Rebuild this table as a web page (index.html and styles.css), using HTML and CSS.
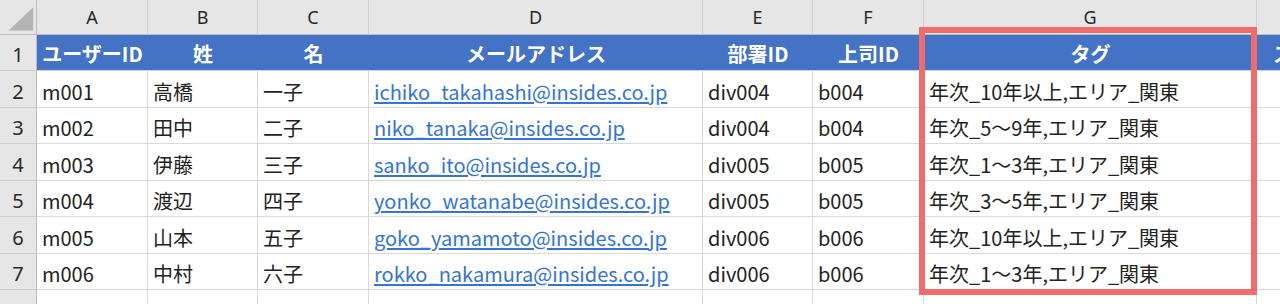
FILE: index.html
```html
<!DOCTYPE html>
<html lang="ja">
<head>
<meta charset="utf-8">
<title>Sheet</title>
<link rel="stylesheet" href="styles.css">
</head>
<body>
<div class="sheet">
  <div class="grid">
    <div class="corner"><svg width="37" height="34" viewBox="0 0 37 34"><polygon points="34,7 34,31 9,31" fill="#b4b4b4"/></svg></div>
    <div class="colhead">A</div>
    <div class="colhead">B</div>
    <div class="colhead">C</div>
    <div class="colhead">D</div>
    <div class="colhead">E</div>
    <div class="colhead">F</div>
    <div class="colhead">G</div>
    <div class="colhead"></div>

    <div class="rowhead">1</div>
    <div class="hdr">ユーザーID</div>
    <div class="hdr">姓</div>
    <div class="hdr">名</div>
    <div class="hdr">メールアドレス</div>
    <div class="hdr">部署ID</div>
    <div class="hdr">上司ID</div>
    <div class="hdr">タグ</div>
    <div class="hdr hdr-clip">ステータス</div>

    <div class="rowhead">2</div>
    <div class="cell">m001</div>
    <div class="cell">高橋</div>
    <div class="cell">一子</div>
    <div class="cell"><span class="link">ichiko_takahashi@insides.co.jp</span></div>
    <div class="cell">div004</div>
    <div class="cell">b004</div>
    <div class="cell">年次_10年以上,エリア_関東</div>
    <div class="cell"></div>

    <div class="rowhead">3</div>
    <div class="cell">m002</div>
    <div class="cell">田中</div>
    <div class="cell">二子</div>
    <div class="cell"><span class="link">niko_tanaka@insides.co.jp</span></div>
    <div class="cell">div004</div>
    <div class="cell">b004</div>
    <div class="cell">年次_5～9年,エリア_関東</div>
    <div class="cell"></div>

    <div class="rowhead">4</div>
    <div class="cell">m003</div>
    <div class="cell">伊藤</div>
    <div class="cell">三子</div>
    <div class="cell"><span class="link">sanko_ito@insides.co.jp</span></div>
    <div class="cell">div005</div>
    <div class="cell">b005</div>
    <div class="cell">年次_1～3年,エリア_関東</div>
    <div class="cell"></div>

    <div class="rowhead">5</div>
    <div class="cell">m004</div>
    <div class="cell">渡辺</div>
    <div class="cell">四子</div>
    <div class="cell"><span class="link">yonko_watanabe@insides.co.jp</span></div>
    <div class="cell">div005</div>
    <div class="cell">b005</div>
    <div class="cell">年次_3～5年,エリア_関東</div>
    <div class="cell"></div>

    <div class="rowhead">6</div>
    <div class="cell">m005</div>
    <div class="cell">山本</div>
    <div class="cell">五子</div>
    <div class="cell"><span class="link">goko_yamamoto@insides.co.jp</span></div>
    <div class="cell">div006</div>
    <div class="cell">b006</div>
    <div class="cell">年次_10年以上,エリア_関東</div>
    <div class="cell"></div>

    <div class="rowhead">7</div>
    <div class="cell">m006</div>
    <div class="cell">中村</div>
    <div class="cell">六子</div>
    <div class="cell"><span class="link">rokko_nakamura@insides.co.jp</span></div>
    <div class="cell">div006</div>
    <div class="cell">b006</div>
    <div class="cell">年次_1～3年,エリア_関東</div>
    <div class="cell"></div>

    <div class="rowhead">8</div>
    <div class="cell"></div>
    <div class="cell"></div>
    <div class="cell"></div>
    <div class="cell"></div>
    <div class="cell"></div>
    <div class="cell"></div>
    <div class="cell"></div>
    <div class="cell"></div>
  </div>
  <div class="highlight"></div>
</div>
</body>
</html>
```

FILE: styles.css
```css
* { box-sizing: border-box; }
html, body { margin: 0; padding: 0; background: #fff; overflow: hidden; }
body {
  font-family: "Noto Sans CJK JP", "Noto Sans", sans-serif;
  color: #222;
}
.sheet {
  position: relative;
  width: 1280px;
  height: 304px;
  overflow: hidden;
}
.grid {
  display: grid;
  grid-template-columns: 37px 111px 110px 111px 334px 110px 111px 333px 200px;
  grid-template-rows: 35px 36px 37px 36px 37px 36px 37px 36px 37px;
}
.grid > div {
  display: flex;
  align-items: center;
  white-space: nowrap;
  overflow: hidden;
}
.corner {
  background: #e6e6e6;
  border-right: 1px solid #bdbdbd;
  border-bottom: 1px solid #bdbdbd;
}
.corner svg { display: block; }
.colhead {
  background: #e6e6e6;
  border-right: 1px solid #cfcfcf;
  border-bottom: 1px solid #bdbdbd;
  justify-content: center;
  font-family: "Noto Sans", "Noto Sans CJK JP", sans-serif;
  font-size: 18px;
  color: #262626;
  padding-bottom: 1px;
}
.rowhead {
  background: #e6e6e6;
  border-right: 1px solid #bdbdbd;
  border-bottom: 1px solid #cfcfcf;
  justify-content: center;
  font-family: "Noto Sans", "Noto Sans CJK JP", sans-serif;
  font-size: 20px;
  color: #2a2a2a;
  padding-top: 4px;
}
.hdr {
  background: #4472c4;
  color: #fff;
  font-weight: 700;
  font-size: 20px;
  justify-content: center;
  border-bottom: 1px solid #d4d4d4;
  padding-top: 2px;
}
.hdr-clip {
  justify-content: flex-start;
  padding-left: 16px;
}
.cell {
  border-right: 1px solid #d9d9d9;
  border-bottom: 1px solid #d9d9d9;
  padding-left: 5px;
  padding-top: 4px;
  font-size: 20px;
  color: #222;
}
.link {
  color: #3474d4;
  text-decoration: underline;
  text-underline-offset: 2px;
}
.highlight {
  position: absolute;
  left: 919px;
  top: 27px;
  width: 338px;
  height: 268px;
  border: 6px solid #f06c6c;
  pointer-events: none;
}
```
